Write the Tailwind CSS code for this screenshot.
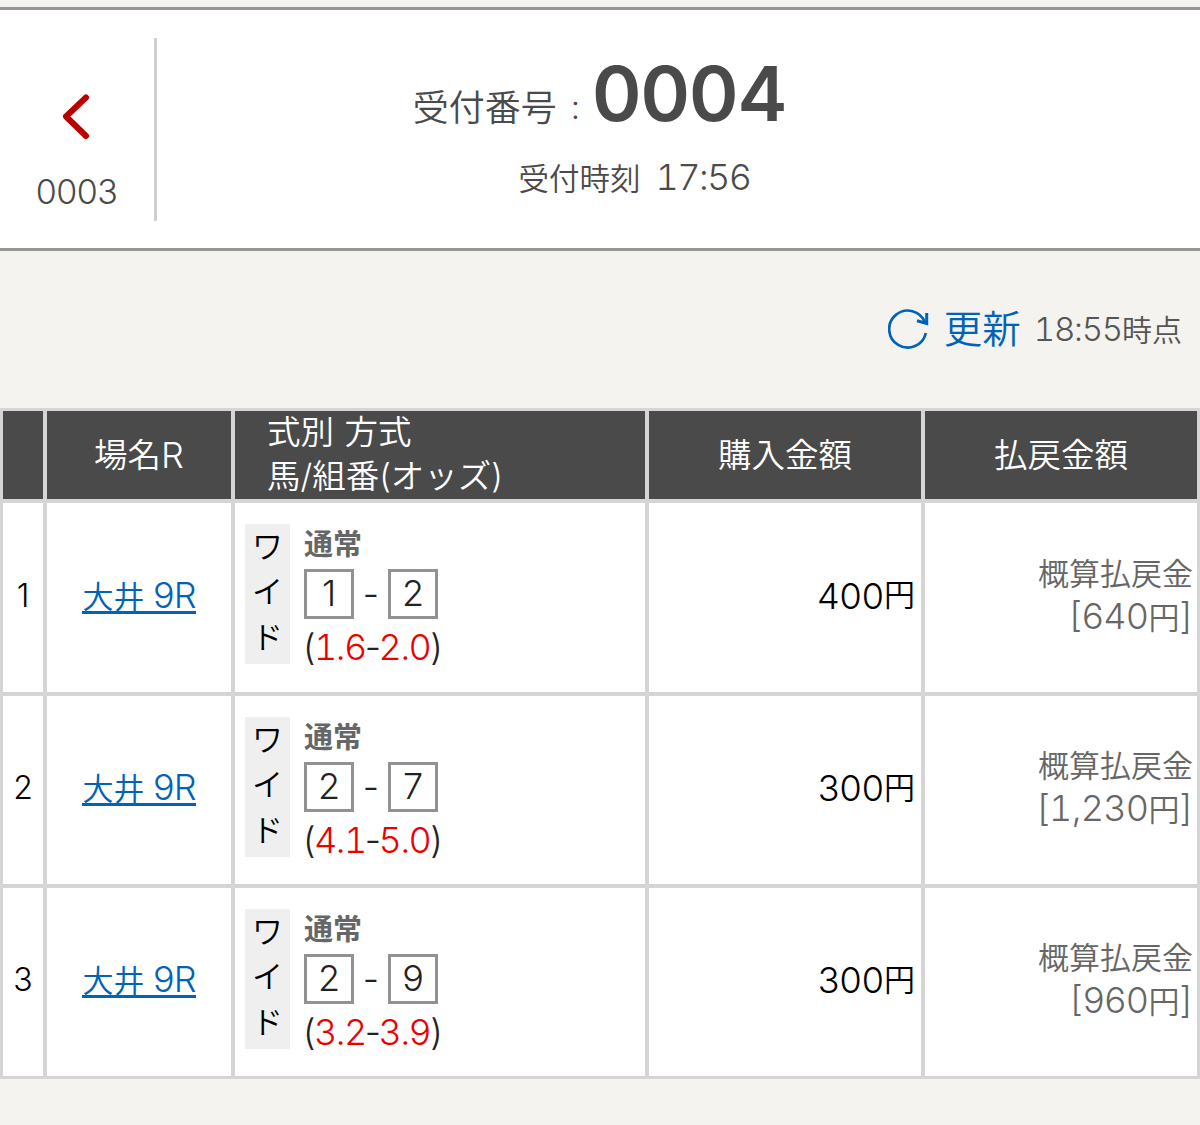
<!DOCTYPE html>
<html lang="ja">
<head>
  <meta charset="UTF-8">
  <meta name="viewport" content="width=device-width, initial-scale=1.0">
  <title>受付番号 : 0004</title>
  <script src="https://cdn.jsdelivr.net/npm/@tailwindcss/browser@4"></script>
</head>
<body class="min-h-screen bg-[#f4f3ef] pt-[7px] font-['Inter','Noto_Sans_CJK_JP',sans-serif] font-[350] text-black">
  <header class="flex h-[244px] border-y-3 border-[#969696] bg-white pt-7 text-[#4a4a4a]">
    <a href="#" class="flex h-[183px] w-[157px] flex-col items-center border-r-3 border-[#d0d0d0] pt-[55px] pr-[1px]">
      <svg class="h-[48px] w-[30px]" viewBox="0 0 30 48" fill="none" stroke="#b80000" stroke-width="6" stroke-linecap="round" stroke-linejoin="round">
        <path d="M24 4.500L4 23.500L24 43"></path>
      </svg>
      <span class="mt-[31px] text-[34px] leading-[40px] tracking-[-0.500px]">0003</span>
    </a>
    <div class="flex flex-1 flex-col items-center pr-[88px]">
      <div class="mr-[70px] flex h-[100px] items-baseline leading-[112px]">
        <span class="text-[36px]">受付番号</span>
        <span class="relative -top-[2px] ml-[14px] text-[33px]">:</span>
        <span class="ml-[12px] text-[75px] font-semibold tracking-[-1px]">0004</span>
      </div>
      <div class="flex items-baseline leading-[78px]">
        <span class="text-[30.500px]">受付時刻</span>
        <span class="ml-[15px] text-[36px] tracking-[-1.600px] tabular-nums">17:56</span>
      </div>
    </div>
  </header>

  <div class="flex h-[157px] items-center justify-end pr-[18px]">
    <a href="#" class="flex items-center text-[#0062b8]">
      <svg class="mb-[2px] h-[42px] w-[42px]" viewBox="0 0 42 42" fill="none" stroke="currentColor" stroke-width="2.700">
        <path d="M37.800 25A18.500 18.500 0 1 1 37 14.500"></path>
        <path d="M38.700 5V15.500L29 12.700" stroke-width="3"></path>
      </svg>
      <span class="ml-[14px] text-[38.500px] leading-none">更新</span>
    </a>
    <span class="ml-[13px] text-[#555]"><span class="text-[33px] tracking-[-1.200px] tabular-nums">18:55</span><span class="text-[30px]">時点</span></span>
  </div>

  <main class="grid grid-cols-[40px_184px_410px_272px_272px] grid-rows-[88px_189px_188px_188px] gap-[4px] bg-[#d5d5d5] p-[3px]">
    <div class="bg-[#4a4a4a]"></div>
    <div class="flex items-center justify-center bg-[#4a4a4a] text-[33.500px] text-white">場名<span class="text-[36px]">R</span></div>
    <div class="flex flex-col justify-center bg-[#4a4a4a] pb-[2px] pl-[32px] text-[33.500px] leading-[44px] text-white">
      <div class="[word-spacing:1px]">式別 方式</div>
      <div>馬/組番(オッズ)</div>
    </div>
    <div class="flex items-center justify-center bg-[#4a4a4a] text-[33.500px] text-white">購入金額</div>
    <div class="flex items-center justify-center bg-[#4a4a4a] text-[33.500px] text-white">払戻金額</div>

    <div class="flex items-center justify-center bg-white pb-[4px] text-[32px]">1</div>
    <div class="flex items-center justify-center bg-white pb-[1px]">
      <a href="#" class="border-b-3 border-[#0062b8] text-[31px] leading-[29px] text-[#0062b8]">大井 <span class="text-[36px] tracking-[-1px]">9R</span></a>
    </div>
    <div class="flex bg-white pl-[10px] pt-[21px]">
      <div class="flex h-[140px] w-[45px] flex-col items-center bg-[#efefef] text-[31px] leading-[45px]">
        <span>ワ</span><span>イ</span><span>ド</span>
      </div>
      <div class="ml-[14px]">
        <div class="h-[45px] text-[29px] leading-[41px] font-bold text-[#666]">通常</div>
        <div class="flex h-[50px] items-center text-[36px] text-[#222]">
          <span class="flex h-[50px] w-[50px] items-center justify-center border-3 border-[#929292] pb-[2px]">1</span>
          <span class="w-[34px] text-center">-</span>
          <span class="flex h-[50px] w-[50px] items-center justify-center border-3 border-[#929292] pb-[2px]">2</span>
        </div>
        <div class="-ml-[1px] text-[36px] leading-[56px] tracking-[-1.500px] text-[#222]">(<span class="text-[#eb0000] tabular-nums">1.6</span><span class="-mx-[1px]">-</span><span class="text-[#eb0000] tabular-nums">2.0</span>)</div>
      </div>
    </div>
    <div class="flex items-center justify-end bg-white pr-[6px] pb-[4px] text-[36px]">400<span class="text-[31px]">円</span></div>
    <div class="flex flex-col items-end justify-center bg-white pr-[4px] pb-[5px] text-[31px] leading-[43px] text-[#666]">
      <div>概算払戻金</div>
      <div class="mr-[1px]"><span class="text-[36px]">[640</span>円<span class="text-[36px]">]</span></div>
    </div>

    <div class="flex items-center justify-center bg-white pb-[4px] text-[32px]">2</div>
    <div class="flex items-center justify-center bg-white pb-[1px]">
      <a href="#" class="border-b-3 border-[#0062b8] text-[31px] leading-[29px] text-[#0062b8]">大井 <span class="text-[36px] tracking-[-1px]">9R</span></a>
    </div>
    <div class="flex bg-white pl-[10px] pt-[21px]">
      <div class="flex h-[140px] w-[45px] flex-col items-center bg-[#efefef] text-[31px] leading-[45px]">
        <span>ワ</span><span>イ</span><span>ド</span>
      </div>
      <div class="ml-[14px]">
        <div class="h-[45px] text-[29px] leading-[41px] font-bold text-[#666]">通常</div>
        <div class="flex h-[50px] items-center text-[36px] text-[#222]">
          <span class="flex h-[50px] w-[50px] items-center justify-center border-3 border-[#929292] pb-[2px]">2</span>
          <span class="w-[34px] text-center">-</span>
          <span class="flex h-[50px] w-[50px] items-center justify-center border-3 border-[#929292] pb-[2px]">7</span>
        </div>
        <div class="-ml-[1px] text-[36px] leading-[56px] tracking-[-1.500px] text-[#222]">(<span class="text-[#eb0000] tabular-nums">4.1</span><span class="-mx-[1px]">-</span><span class="text-[#eb0000] tabular-nums">5.0</span>)</div>
      </div>
    </div>
    <div class="flex items-center justify-end bg-white pr-[6px] pb-[4px] text-[36px]">300<span class="text-[31px]">円</span></div>
    <div class="flex flex-col items-end justify-center bg-white pr-[4px] pb-[5px] text-[31px] leading-[43px] text-[#666]">
      <div>概算払戻金</div>
      <div class="mr-[1px]"><span class="text-[36px] tracking-[-0.700px] tabular-nums">[1,230</span>円<span class="text-[36px]">]</span></div>
    </div>

    <div class="flex items-center justify-center bg-white pb-[4px] text-[32px]">3</div>
    <div class="flex items-center justify-center bg-white pb-[1px]">
      <a href="#" class="border-b-3 border-[#0062b8] text-[31px] leading-[29px] text-[#0062b8]">大井 <span class="text-[36px] tracking-[-1px]">9R</span></a>
    </div>
    <div class="flex bg-white pl-[10px] pt-[21px]">
      <div class="flex h-[140px] w-[45px] flex-col items-center bg-[#efefef] text-[31px] leading-[45px]">
        <span>ワ</span><span>イ</span><span>ド</span>
      </div>
      <div class="ml-[14px]">
        <div class="h-[45px] text-[29px] leading-[41px] font-bold text-[#666]">通常</div>
        <div class="flex h-[50px] items-center text-[36px] text-[#222]">
          <span class="flex h-[50px] w-[50px] items-center justify-center border-3 border-[#929292] pb-[2px]">2</span>
          <span class="w-[34px] text-center">-</span>
          <span class="flex h-[50px] w-[50px] items-center justify-center border-3 border-[#929292] pb-[2px]">9</span>
        </div>
        <div class="-ml-[1px] text-[36px] leading-[56px] tracking-[-1.500px] text-[#222]">(<span class="text-[#eb0000] tabular-nums">3.2</span><span class="-mx-[1px]">-</span><span class="text-[#eb0000] tabular-nums">3.9</span>)</div>
      </div>
    </div>
    <div class="flex items-center justify-end bg-white pr-[6px] pb-[4px] text-[36px]">300<span class="text-[31px]">円</span></div>
    <div class="flex flex-col items-end justify-center bg-white pr-[4px] pb-[5px] text-[31px] leading-[43px] text-[#666]">
      <div>概算払戻金</div>
      <div class="mr-[1px]"><span class="text-[36px]">[960</span>円<span class="text-[36px]">]</span></div>
    </div>
  </main>
</body>
</html>
